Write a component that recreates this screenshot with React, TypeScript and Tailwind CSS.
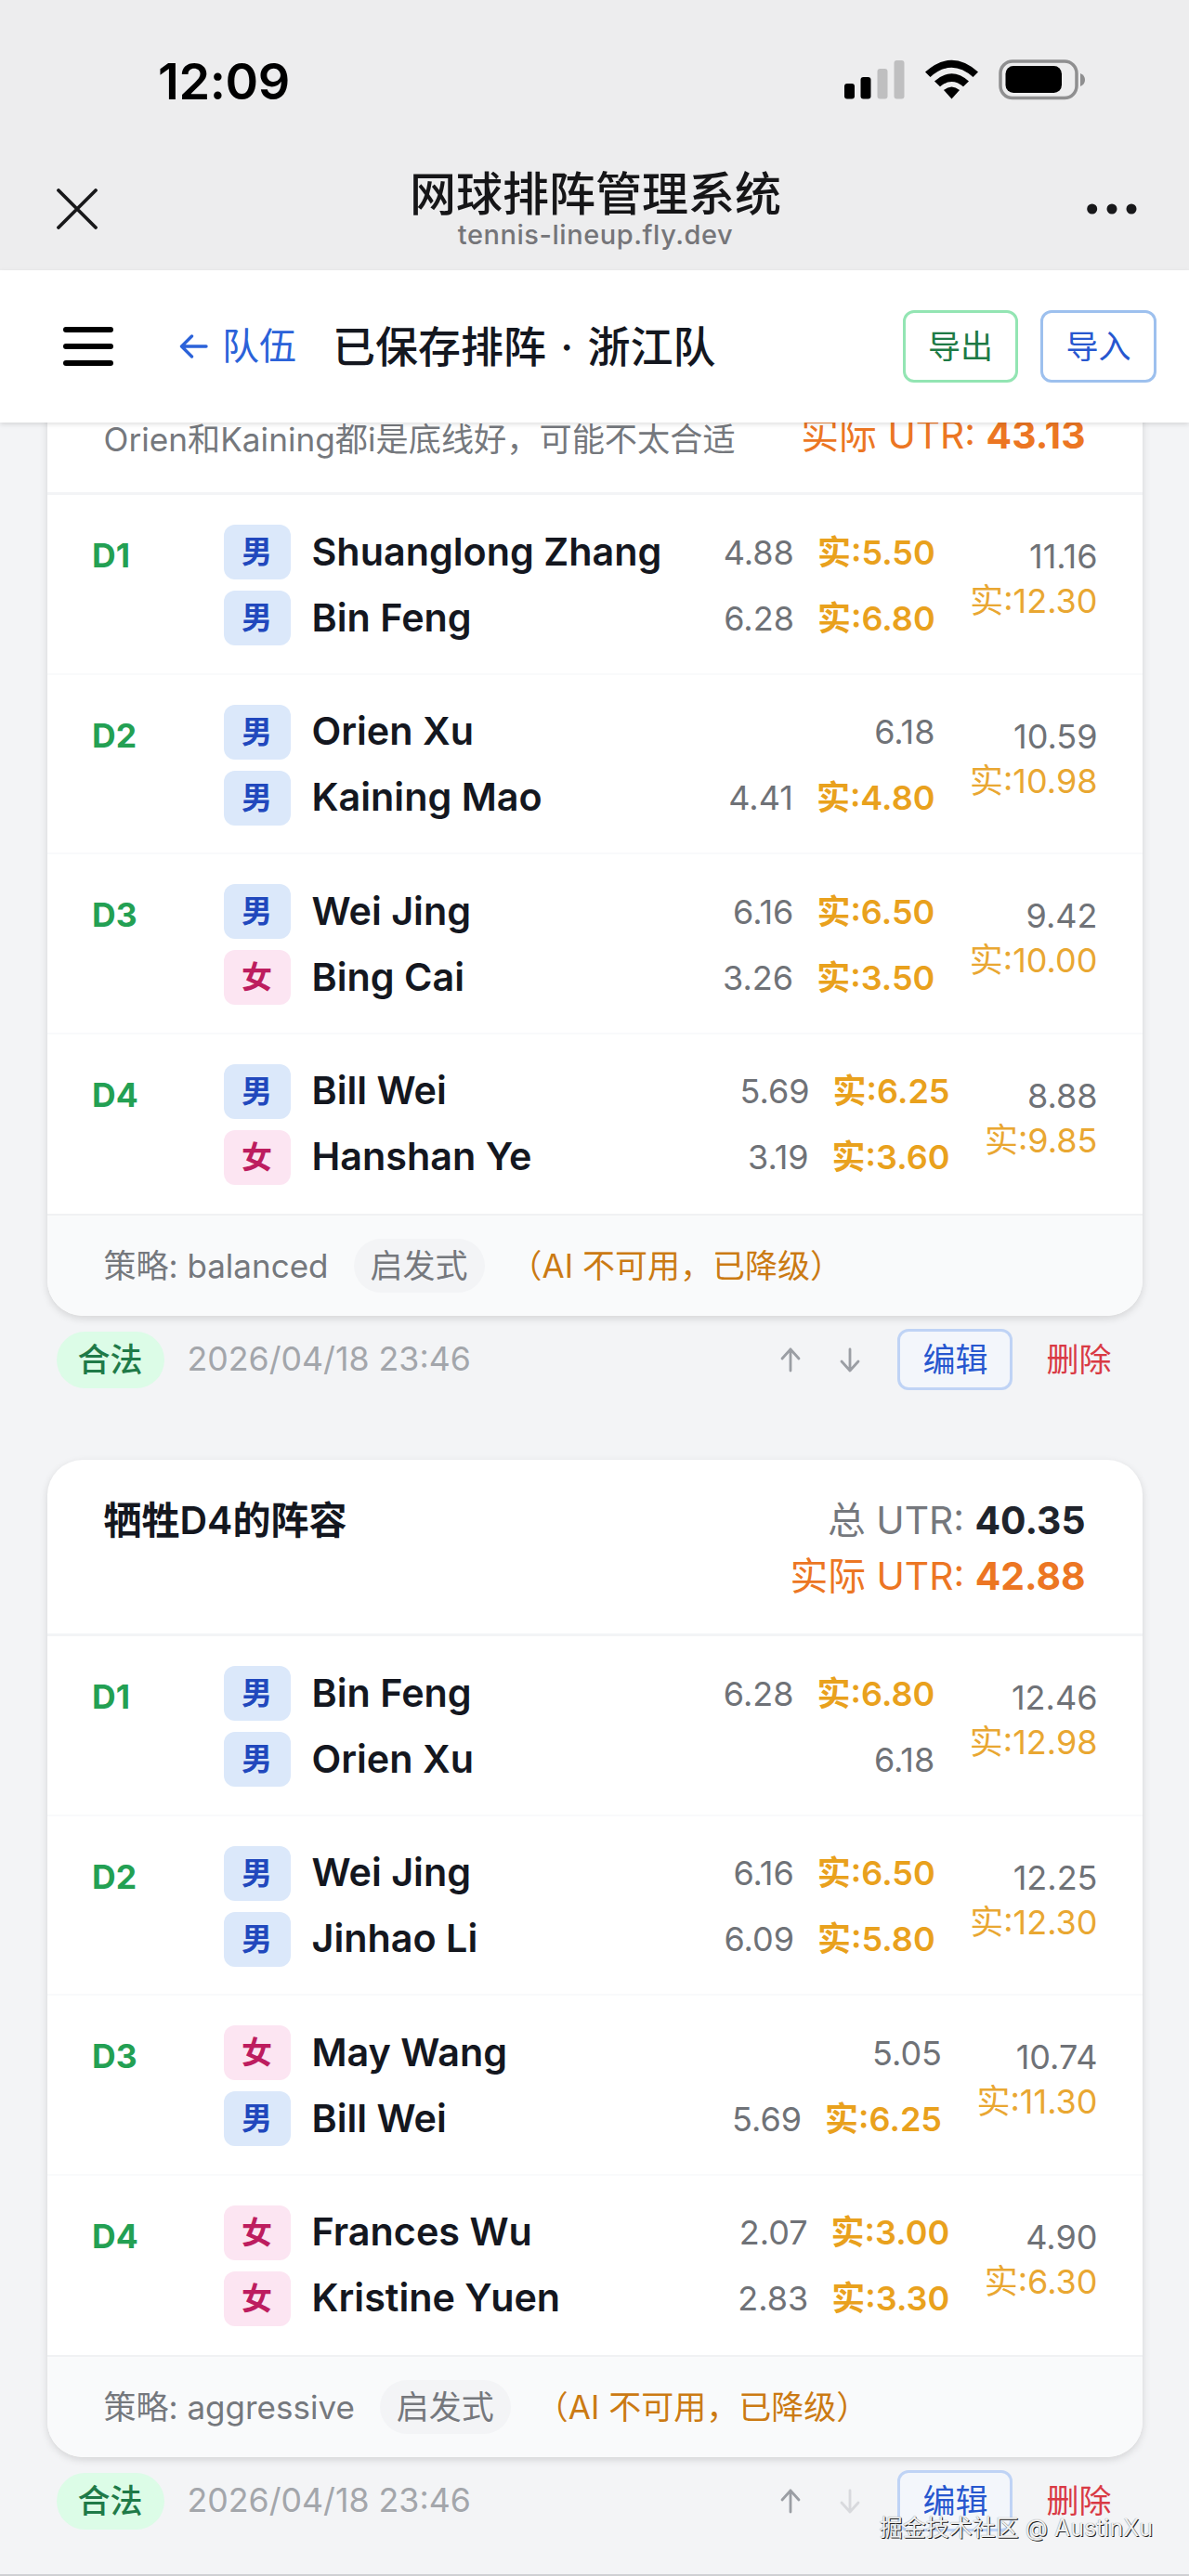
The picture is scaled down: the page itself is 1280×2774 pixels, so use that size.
import React from 'react';

type Gender = '男' | '女';

interface Player {
    gender: Gender;
    name: string;
    utr: string;
    actual?: string;
}

interface Pair {
    slot: string;
    players: Player[];
    total: string;
    actualTotal: string;
}

interface Lineup {
    title: string;
    note?: string;
    utr: string;
    actualUtr: string;
    strategy: string;
    pairs: Pair[];
    savedAt: string;
    isLast?: boolean;
}

const lineups: Lineup[] = [
    {
        title: '',
        note: 'Orien和Kaining都i是底线好，可能不太合适',
        utr: '',
        actualUtr: '43.13',
        strategy: 'balanced',
        savedAt: '2026/04/18 23:46',
        pairs: [
            {
                slot: 'D1', total: '11.16', actualTotal: '12.30',
                players: [
                    { gender: '男', name: 'Shuanglong Zhang', utr: '4.88', actual: '5.50' },
                    { gender: '男', name: 'Bin Feng', utr: '6.28', actual: '6.80' }
                ]
            },
            {
                slot: 'D2', total: '10.59', actualTotal: '10.98',
                players: [
                    { gender: '男', name: 'Orien Xu', utr: '6.18' },
                    { gender: '男', name: 'Kaining Mao', utr: '4.41', actual: '4.80' }
                ]
            },
            {
                slot: 'D3', total: '9.42', actualTotal: '10.00',
                players: [
                    { gender: '男', name: 'Wei Jing', utr: '6.16', actual: '6.50' },
                    { gender: '女', name: 'Bing Cai', utr: '3.26', actual: '3.50' }
                ]
            },
            {
                slot: 'D4', total: '8.88', actualTotal: '9.85',
                players: [
                    { gender: '男', name: 'Bill Wei', utr: '5.69', actual: '6.25' },
                    { gender: '女', name: 'Hanshan Ye', utr: '3.19', actual: '3.60' }
                ]
            }
        ]
    },
    {
        title: '牺牲D4的阵容',
        utr: '40.35',
        actualUtr: '42.88',
        strategy: 'aggressive',
        savedAt: '2026/04/18 23:46',
        isLast: true,
        pairs: [
            {
                slot: 'D1', total: '12.46', actualTotal: '12.98',
                players: [
                    { gender: '男', name: 'Bin Feng', utr: '6.28', actual: '6.80' },
                    { gender: '男', name: 'Orien Xu', utr: '6.18' }
                ]
            },
            {
                slot: 'D2', total: '12.25', actualTotal: '12.30',
                players: [
                    { gender: '男', name: 'Wei Jing', utr: '6.16', actual: '6.50' },
                    { gender: '男', name: 'Jinhao Li', utr: '6.09', actual: '5.80' }
                ]
            },
            {
                slot: 'D3', total: '10.74', actualTotal: '11.30',
                players: [
                    { gender: '女', name: 'May Wang', utr: '5.05' },
                    { gender: '男', name: 'Bill Wei', utr: '5.69', actual: '6.25' }
                ]
            },
            {
                slot: 'D4', total: '4.90', actualTotal: '6.30',
                players: [
                    { gender: '女', name: 'Frances Wu', utr: '2.07', actual: '3.00' },
                    { gender: '女', name: 'Kristine Yuen', utr: '2.83', actual: '3.30' }
                ]
            }
        ]
    }
];

const StatusBar: React.FC = () => (
    <div className="flex h-[172px] items-center justify-between pl-[170px] pr-[112px]">
        <span className="pt-[3px] text-[54px] font-semibold leading-none tracking-[-0.4px] text-black">12:09</span>
        <svg width="260" height="44" viewBox="908 64 260 44">
            <rect x="909" y="90" width="11" height="16.5" rx="3" fill="#000" />
            <rect x="926.5" y="83" width="11" height="23.5" rx="3" fill="#000" />
            <rect x="944.5" y="74" width="11" height="32.5" rx="3" fill="#bfbfc0" />
            <rect x="962.5" y="65" width="11" height="41.5" rx="3" fill="#bfbfc0" />
            <g fill="#000">
                <path d="M996 77.5 Q1024.5 52 1053 77.5 L1047.5 83 Q1024.5 62.5 1001.5 83 Z" />
                <path d="M1006 87.5 Q1024.5 71 1043 87.5 L1037 93.3 Q1024.5 82.5 1012 93.3 Z" />
                <path d="M1016 97 Q1024.5 90 1033 97 L1024.5 106.5 Z" />
            </g>
            <rect x="1077" y="66" width="82" height="39.5" rx="13" fill="none" stroke="#8f8f90" strokeWidth="3.5" />
            <rect x="1082.5" y="71" width="60.5" height="29" rx="8.5" fill="#000" />
            <path d="M1163 79 Q1168 81 1168 86 Q1168 91 1163 93 Z" fill="#8f8f90" />
        </svg>
    </div>
);

const BrowserBar: React.FC = () => (
    <div className="flex h-[119px] items-start justify-between pl-[61px] pr-[56px]">
        <svg className="mt-[31px]" width="44" height="44" viewBox="0 0 44 44" stroke="#18181a" strokeWidth="3.8" strokeLinecap="round">
            <path d="M2 2 L42 42 M42 2 L2 42" />
        </svg>
        <div className="flex flex-col items-center pl-[7px]">
            <h1 className="mt-[9px] text-[50px] font-medium leading-[56px] text-[#161618]">网球排阵管理系统</h1>
            <span className="text-[29px] font-medium leading-[32px] tracking-[0.55px] text-[#757579]">tennis-lineup.fly.dev</span>
        </div>
        <svg className="mt-[47px]" width="54" height="12" viewBox="0 0 54 12" fill="#18181a">
            <circle cx="5.7" cy="6" r="5.5" />
            <circle cx="27" cy="6" r="5.5" />
            <circle cx="48" cy="6" r="5.5" />
        </svg>
    </div>
);

const NavBar: React.FC = () => (
    <nav className="relative z-10 flex h-[164px] items-center bg-white pl-[68px] pr-[35px] shadow-[0_2px_5px_rgba(0,0,0,0.12)]">
        <div className="flex w-[54px] flex-col gap-[12px]">
            <span className="h-[6px] rounded-full bg-black" />
            <span className="h-[6px] rounded-full bg-black" />
            <span className="h-[6px] rounded-full bg-black" />
        </div>
        <a className="ml-[71px] flex items-center gap-[15px] text-[40px] leading-none text-[#2b62d9]">
            <svg width="31" height="26" viewBox="0 0 31 26" fill="none" stroke="currentColor" strokeWidth="3.4" strokeLinecap="round" strokeLinejoin="round">
                <path d="M29 13 H3 M13.5 2 L2.5 13 L13.5 24" />
            </svg>
            队伍
        </a>
        <h2 className="ml-[39px] text-[46px] font-medium leading-none text-[#14171f] [word-spacing:3px]">已保存排阵 · 浙江队</h2>
        <div className="ml-auto flex gap-[24px]">
            <button className="h-[78px] w-[124px] rounded-[12px] border-[3px] border-[#93e5b3] text-[35px] text-[#1d7a45]">导出</button>
            <button className="h-[78px] w-[125px] rounded-[12px] border-[3px] border-[#9dc0ee] text-[35px] text-[#2757cf]">导入</button>
        </div>
    </nav>
);

const GenderBadge: React.FC<{ gender: Gender }> = ({ gender }) => (
    <span
        className={`flex h-[59px] w-[72px] items-center justify-center rounded-[12px] text-[33px] font-bold leading-none ${gender === '男'
                ? 'bg-[#dbe8fa] text-[#2148bd]'
                : 'bg-[#fce5f2] text-[#bd1d5f]'
            }`}
    >
        {gender}
    </span>
);

const PairRow: React.FC<{ pair: Pair }> = ({ pair }) => (
    <div className="flex h-[193.5px] items-start border-b-2 border-[#f9fafb] pl-[48.5px] pr-[48px] pt-[32px] last:border-b-0">
        <span className="mt-[11px] w-[141.5px] text-[35.5px] font-bold leading-[46px] text-[#23a053]">{pair.slot}</span>
        <div className="flex flex-1 flex-col gap-[12px]">
            {pair.players.map((p) => (
                <div key={p.name} className="flex h-[59px] items-center">
                    <GenderBadge gender={p.gender} />
                    <span className="ml-[23px] flex-1 whitespace-nowrap text-[41.3px] font-semibold leading-none text-[#14171f]">{p.name}</span>
                    <span className="text-[36px] leading-none text-[#6f7277]">{p.utr}</span>
                    {p.actual && (
                        <span className="ml-[25px] text-[36px] font-semibold leading-none text-[#e9a11d]">实:{p.actual}</span>
                    )}
                </div>
            ))}
        </div>
        <div className="ml-[37.5px] mt-[10px] flex flex-col text-right text-[36px] leading-[48px]">
            <span className="text-[#6f7277]">{pair.total}</span>
            <span className="text-[#e9a732]">实:{pair.actualTotal}</span>
        </div>
    </div>
);

const LineupCard: React.FC<{ lineup: Lineup }> = ({ lineup }) => (
    <section className="overflow-hidden rounded-[38px] bg-white shadow-[0_3px_9px_rgba(0,0,0,0.13)]">
        <header className="flex h-[190px] justify-between border-b-[3px] border-[#f3f4f6] px-[61px] pt-[35px]">
            <div className="flex flex-col">
                <h3 className="h-[60px] text-[41px] font-semibold leading-[60px] text-[#14171f]">{lineup.title}</h3>
                {lineup.note && <p className="mt-[8px] text-[35.2px] leading-[54px] text-[#75787d]">{lineup.note}</p>}
            </div>
            <div className="flex flex-col text-right text-[40.8px] leading-[60px]">
                <span className="h-[60px] text-[#75787d]">
                    {lineup.utr && <>总 UTR: <b className="font-bold text-[#20242c]">{lineup.utr}</b></>}
                </span>
                <span className="text-[#ec7623]">实际 UTR: <b className="font-bold">{lineup.actualUtr}</b></span>
            </div>
        </header>
        <div>
            {lineup.pairs.map((pair) => <PairRow key={pair.slot} pair={pair} />)}
        </div>
        <footer className="flex h-[110px] items-center border-t-2 border-[#f0f1f3] bg-[#f9fafb] px-[61px] text-[35px] leading-none text-[#75787d]">
            <span>策略: {lineup.strategy}</span>
            <span className="ml-[27px] flex h-[58px] items-center rounded-full bg-[#f3f4f6] px-[18px]">启发式</span>
            <span className="ml-[27px] text-[#cb7a13]">（AI 不可用，已降级）</span>
        </footer>
    </section>
);

const LineupMeta: React.FC<{ lineup: Lineup }> = ({ lineup }) => (
    <div className="mt-[14px] flex h-[66px] items-center pl-[10px] pr-[33px] text-[35px] leading-none">
        <span className="flex h-[61px] items-center rounded-full bg-[#dcfce7] px-[23px] font-medium text-[#1f7a48]">合法</span>
        <span className="ml-[25px] text-[35.7px] text-[#a3a6ab]">{lineup.savedAt}</span>
        <div className="ml-auto flex items-center">
            <svg width="22" height="27" viewBox="0 0 22 27" fill="none" stroke="#9b9ea4" strokeWidth="2.8" strokeLinecap="round" strokeLinejoin="round">
                <path d="M11 25 V2 M2 12 L11 2 L20 12" />
            </svg>
            <svg
                className={`ml-[42px] ${lineup.isLast ? 'opacity-30' : ''}`}
                width="22" height="27" viewBox="0 0 22 27" fill="none" stroke="#9b9ea4" strokeWidth="2.8" strokeLinecap="round" strokeLinejoin="round"
            >
                <path d="M11 2 V25 M2 15 L11 25 L20 15" />
            </svg>
            <button className="ml-[40px] h-[66px] w-[124px] rounded-[12px] border-[3px] border-[#bfd3f5] bg-[#f3f6fb] leading-none text-[#2757cf]">编辑</button>
            <button className="ml-[36px] leading-none text-[#d93a45]">删除</button>
        </div>
    </div>
);

export default function App() {
    return (
        <div className="relative h-[2774px] w-[1280px] overflow-hidden bg-[#f3f4f6] font-['Inter','Noto_Sans_CJK_SC',sans-serif]">
            <div className="relative z-10 bg-[#ededee]">
                <StatusBar />
                <BrowserBar />
                <NavBar />
            </div>
            <main className="-mt-[112px] flex flex-col gap-[75px] px-[50.5px]">
                {lineups.map((lineup, i) => (
                    <div key={i}>
                        <LineupCard lineup={lineup} />
                        <LineupMeta lineup={lineup} />
                    </div>
                ))}
            </main>
            <div className="absolute bottom-0 left-0 h-[2px] w-full bg-[#cfd0d3]" />
            <div className="absolute right-[39px] top-[2704px] whitespace-nowrap text-[25px] leading-[36px] text-[#f0f0f0] [text-shadow:1px_1px_0_#222,0_0_1px_#777]">
                掘金技术社区 @ AustinXu
            </div>
        </div>
    );
}
